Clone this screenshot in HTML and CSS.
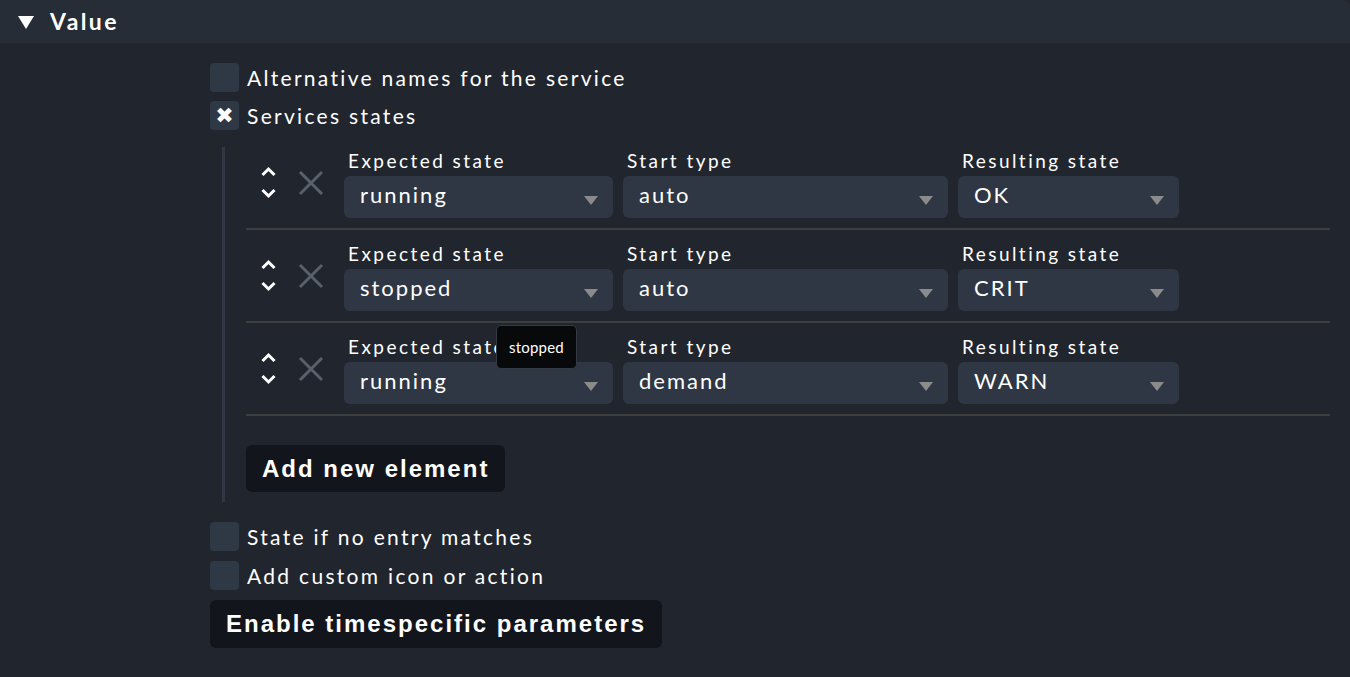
FILE: index.html
```html
<!DOCTYPE html>
<html>
<head>
<meta charset="utf-8">
<link rel="stylesheet" href="styles.css">
</head>
<body>
<div class="section">
  <div class="head">
    <svg class="tri" width="16" height="13" viewBox="0 0 16 13"><polygon points="0,0 16,0 8,13" fill="#fff"/></svg>
    <span class="title">Value</span>
  </div>
  <div class="body">
    <div class="cb-row"><span class="cb"></span><span class="cb-label">Alternative names for the service</span></div>
    <div class="cb-row"><span class="cb checked">✖</span><span class="cb-label">Services states</span></div>
    <div class="list">
      <div class="item first">
        <div class="ctrl">
          <svg class="updown" width="15" height="35" viewBox="0 0 15 35"><polyline points="1.5,9 7.5,3 13.5,9" fill="none" stroke="#fff" stroke-width="3"/><polyline points="1.5,24 7.5,30 13.5,24" fill="none" stroke="#fff" stroke-width="3"/></svg>
          <svg class="del" width="26" height="26" viewBox="0 0 26 26"><path d="M2 2 L24 24 M24 2 L2 24" stroke="#59606a" stroke-width="3"/></svg>
        </div>
        <div class="field f1"><div class="lbl">Expected state</div><div class="sel">running<span class="arr"></span></div></div>
        <div class="field f2"><div class="lbl">Start type</div><div class="sel">auto<span class="arr"></span></div></div>
        <div class="field f3"><div class="lbl">Resulting state</div><div class="sel">OK<span class="arr"></span></div></div>
      </div>
      <div class="item">
        <div class="ctrl">
          <svg class="updown" width="15" height="35" viewBox="0 0 15 35"><polyline points="1.5,9 7.5,3 13.5,9" fill="none" stroke="#fff" stroke-width="3"/><polyline points="1.5,24 7.5,30 13.5,24" fill="none" stroke="#fff" stroke-width="3"/></svg>
          <svg class="del" width="26" height="26" viewBox="0 0 26 26"><path d="M2 2 L24 24 M24 2 L2 24" stroke="#59606a" stroke-width="3"/></svg>
        </div>
        <div class="field f1"><div class="lbl">Expected state</div><div class="sel">stopped<span class="arr"></span></div></div>
        <div class="field f2"><div class="lbl">Start type</div><div class="sel">auto<span class="arr"></span></div></div>
        <div class="field f3"><div class="lbl">Resulting state</div><div class="sel">CRIT<span class="arr"></span></div></div>
      </div>
      <div class="item">
        <div class="ctrl">
          <svg class="updown" width="15" height="35" viewBox="0 0 15 35"><polyline points="1.5,9 7.5,3 13.5,9" fill="none" stroke="#fff" stroke-width="3"/><polyline points="1.5,24 7.5,30 13.5,24" fill="none" stroke="#fff" stroke-width="3"/></svg>
          <svg class="del" width="26" height="26" viewBox="0 0 26 26"><path d="M2 2 L24 24 M24 2 L2 24" stroke="#59606a" stroke-width="3"/></svg>
        </div>
        <div class="field f1 has-tip"><div class="lbl">Expected state</div><div class="sel">running<span class="arr"></span></div><div class="tip">stopped</div></div>
        <div class="field f2"><div class="lbl">Start type</div><div class="sel">demand<span class="arr"></span></div></div>
        <div class="field f3"><div class="lbl">Resulting state</div><div class="sel">WARN<span class="arr"></span></div></div>
      </div>
      <button class="btn add">Add new element</button>
    </div>
    <div class="cb-row r2"><span class="cb"></span><span class="cb-label">State if no entry matches</span></div>
    <div class="cb-row r3"><span class="cb"></span><span class="cb-label">Add custom icon or action</span></div>
    <button class="btn timespec">Enable timespecific parameters</button>
  </div>
</div>
</body>
</html>
```

FILE: styles.css
```css
html, body {
  margin: 0;
  padding: 0;
  background: #21262e;
  height: 100%;
  overflow: hidden;
}
body {
  font-family: Lato, "Noto Sans", sans-serif;
  color: #fff;
}
.section {
  width: 1350px;
}
.head {
  height: 43px;
  background: #272d37;
  display: flex;
  align-items: center;
  border-top-right-radius: 6px;
}
.tri {
  margin-left: 18px;
  margin-top: 1px;
}
.title {
  margin-left: 16px;
  margin-top: -2px;
  font-weight: 700;
  font-size: 23px;
  letter-spacing: 2.4px;
}
.body {
  padding: 20px 20px 0 210px;
}
.cb-row {
  display: flex;
  align-items: center;
  height: 29px;
  margin-bottom: 9px;
}
.cb-row.r2 { margin-top: 20px; margin-bottom: 10px; }
.cb-row.r3 { margin-bottom: 10px; }
.cb {
  width: 29px;
  height: 29px;
  border-radius: 4px;
  background: #2f3845;
  display: flex;
  align-items: center;
  justify-content: center;
  font-size: 22px;
  line-height: 29px;
  color: #fff;
  font-family: "DejaVu Sans", sans-serif;
}
.cb-label {
  margin-left: 8px;
  font-size: 21px;
  letter-spacing: 2.3px;
}
.list {
  margin-top: 17px;
  margin-left: 12px;
  border-left: 3px solid #313845;
  padding-left: 21px;
  padding-bottom: 10px;
  display: flex;
  flex-direction: column;
  align-items: flex-start;
}
.item {
  align-self: stretch;
  display: flex;
  align-items: center;
  padding: 13px 0 10px 15px;
  border-bottom: 2px solid #3d3e40;
}
.item.first {
  padding-top: 3px;
}
.ctrl {
  display: flex;
  align-items: center;
  margin-top: -2px;
}
.del {
  margin-left: 22px;
  margin-right: 20px;
}
.field {
  display: flex;
  flex-direction: column;
  margin-right: 10px;
}
.has-tip { position: relative; }
.f1 { width: 269px; }
.f2 { width: 325px; }
.f3 { width: 221px; }
.lbl {
  font-size: 19px;
  line-height: 22px;
  letter-spacing: 2.45px;
  padding-left: 4px;
  margin-bottom: 4px;
}
.sel {
  position: relative;
  height: 38px;
  line-height: 38px;
  padding-bottom: 4px;
  padding-left: 16px;
  background: #2f3744;
  border-radius: 6px;
  font-size: 22px;
  letter-spacing: 2px;
}
.arr {
  position: absolute;
  right: 15px;
  top: 20px;
  width: 0;
  height: 0;
  border-left: 7.5px solid transparent;
  border-right: 7.5px solid transparent;
  border-top: 9px solid #8b8b8b;
}
.tip {
  position: absolute;
  left: 152px;
  top: -11px;
  width: 79px;
  height: 42px;
  background: #08090b;
  border: 1px solid #343a43;
  border-radius: 5px;
  font-size: 15px;
  line-height: 42px;
  text-align: center;
  letter-spacing: 0.2px;
}
.btn {
  background: #12161c;
  color: #fff;
  border: none;
  border-radius: 6px;
  font-family: "Liberation Sans", Arial, sans-serif;
  font-weight: 700;
  font-size: 24px;
  letter-spacing: 2px;
  height: 47px;
  padding: 0 16px;
  cursor: pointer;
}
.btn.add {
  margin-top: 29px;
}
.btn.timespec {
  height: 48px;
}
```
